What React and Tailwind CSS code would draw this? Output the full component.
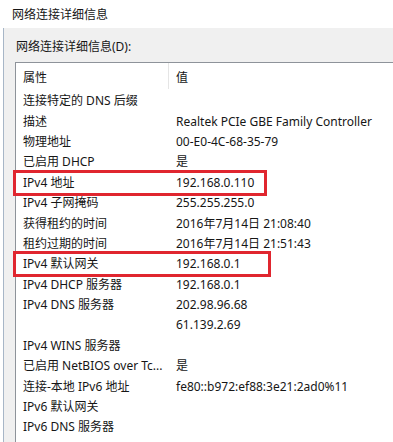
import React from "react";

const rows = [
  ["连接特定的 DNS 后缀", ""],
  ["描述", "Realtek PCIe GBE Family Controller"],
  ["物理地址", "00-E0-4C-68-35-79"],
  ["已启用 DHCP", "是"],
  ["IPv4 地址", "192.168.0.110", "w-[254px]"],
  ["IPv4 子网掩码", "255.255.255.0"],
  ["获得租约的时间", "2016年7月14日 21:08:40"],
  ["租约过期的时间", "2016年7月14日 21:51:43"],
  ["IPv4 默认网关", "192.168.0.1", "w-[258px]"],
  ["IPv4 DHCP 服务器", "192.168.0.1"],
  ["IPv4 DNS 服务器", "202.98.96.68"],
  ["", "61.139.2.69"],
  ["IPv4 WINS 服务器", ""],
  ["已启用 NetBIOS over Tc...", "是"],
  ["连接-本地 IPv6 地址", "fe80::b972:ef88:3e21:2ad0%11"],
  ["IPv6 默认网关", ""],
  ["IPv6 DNS 服务器", ""],
];

const App = () => {
  return (
    <div
      className="w-[393px] h-[442px] overflow-hidden bg-white flex flex-col text-[12px] text-[#161616]"
      style={{ fontFamily: '"Noto Sans", "Noto Sans CJK SC", sans-serif' }}
    >
      <div className="h-[28px] shrink-0 flex items-center pl-[12px] pt-[2px]">
        网络连接详细信息
      </div>
      <div className="flex-1 ml-[3px] border-l border-[#a7b6c7] bg-[#f0f0f0] flex flex-col pl-[11px]">
        <div className="h-[34px] shrink-0 flex items-center pl-[1px] pt-[4px]">
          网络连接详细信息(D):
        </div>
        <div className="flex-1 bg-white border-l border-t border-[#8e939a]">
          <div className="h-[28px] flex items-center">
            <div className="w-[152px] pl-[7px] flex items-center h-full pt-[1px]">属性</div>
            <div className="h-[26px] self-start border-l border-[#e5e5e5]" />
            <div className="pl-[7px] pt-[1px]">值</div>
          </div>
          {rows.map(([name, value, box], i) => (
            <div key={i} className="relative h-[20.4px] flex items-center whitespace-nowrap">
              <div className="w-[160px] pl-[7px]">{name}</div>
              <div>{value}</div>
              {box && (
                <div
                  className={`absolute -left-[3px] -top-[3px] h-[26px] border-[3px] border-[#e0262f] ${box}`}
                />
              )}
            </div>
          ))}
        </div>
      </div>
    </div>
  );
};

export default App;
